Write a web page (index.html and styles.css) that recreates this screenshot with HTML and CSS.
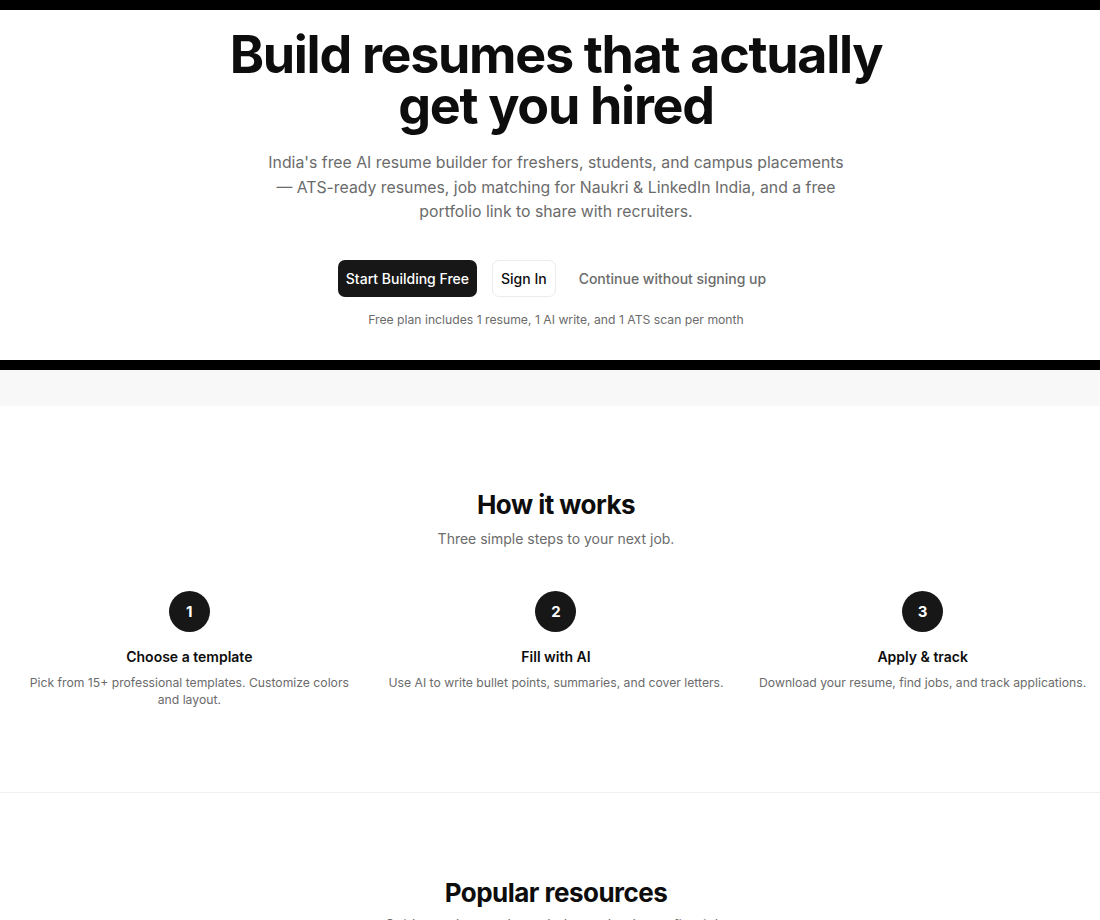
FILE: index.html
```html
<!DOCTYPE html>
<html>
<head>
    <meta name="viewport" content="width=device-width, initial-scale=1.0">
    <title>Resume Builder - Build resumes that actually get you hired</title>
    <link rel="stylesheet" href="styles.css">
</head>
<body>
    <div class="page">
        <div class="top-bar"></div>

        <section class="hero">
            <h1>Build resumes that actually<br>get you hired</h1>
            <p class="hero-text">India's free AI resume builder for freshers, students, and campus placements — ATS-ready resumes, job matching for Naukri &amp; LinkedIn India, and a free portfolio link to share with recruiters.</p>

            <div class="hero-actions">
                <a href="#" class="btn btn-primary">Start Building Free</a>
                <a href="#" class="btn btn-outline">Sign In</a>
                <a href="#" class="btn btn-link">Continue without signing up</a>
            </div>

            <p class="hero-note">Free plan includes 1 resume, 1 AI write, and 1 ATS scan per month</p>
        </section>

        <div class="divider-bar"></div>
        <div class="band"></div>

        <section class="steps">
            <h2>How it works</h2>
            <p class="section-sub">Three simple steps to your next job.</p>

            <div class="steps-grid">
                <div class="step">
                    <div class="step-num">1</div>
                    <h3>Choose a template</h3>
                    <p>Pick from 15+ professional templates. Customize colors and layout.</p>
                </div>
                <div class="step">
                    <div class="step-num">2</div>
                    <h3>Fill with AI</h3>
                    <p>Use AI to write bullet points, summaries, and cover letters.</p>
                </div>
                <div class="step">
                    <div class="step-num">3</div>
                    <h3>Apply &amp; track</h3>
                    <p>Download your resume, find jobs, and track applications.</p>
                </div>
            </div>
        </section>

        <section class="resources">
            <h2>Popular resources</h2>
            <p class="section-sub">Guides and examples to help you land your first job.</p>
        </section>
    </div>
</body>
</html>
```

FILE: styles.css
```css
:root {
    --ink: #0d0d0d;
    --dark: #171717;
    --muted: #6b6b6b;
    --soft: #f8f8f8;
    --line: #efefef;
}

html, body {
    margin: 0;
    padding: 0;
    overflow: hidden;
    background: #fff;
}

body {
    font-family: Inter, 'Noto Sans', sans-serif;
    color: var(--ink);
}

.page {
    width: 1112px;
}

.top-bar,
.divider-bar {
    height: 10px;
    background: #000;
}

/* Hero */
.hero {
    height: 350px;
    text-align: center;
    box-sizing: border-box;
    padding-top: 19px;
}

.hero h1 {
    margin: 0;
    font-size: 52px;
    line-height: 51px;
    font-weight: 700;
    letter-spacing: -0.025em;
}

.hero-text {
    max-width: 584px;
    margin: 20px auto 0;
    font-size: 15.8px;
    line-height: 24.5px;
    color: var(--muted);
}

.hero-actions {
    display: flex;
    justify-content: center;
    align-items: center;
    gap: 15px;
    margin-top: 35px;
}

.btn {
    display: inline-flex;
    align-items: center;
    height: 37px;
    padding: 0 8px;
    box-sizing: border-box;
    border-radius: 7px;
    font-size: 14px;
    font-weight: 500;
    text-decoration: none;
}

.btn-primary {
    background: var(--dark);
    color: #fff;
}

.btn-outline {
    border: 1px solid #ececec;
    color: var(--ink);
}

.btn-link {
    color: var(--muted);
    padding: 0 8px;
}

.hero-note {
    margin: 15px 0 0;
    font-size: 12.2px;
    color: var(--muted);
}

.band {
    height: 36px;
    background: var(--soft);
}

/* How it works */
.steps {
    height: 387px;
    box-sizing: border-box;
    padding-top: 84px;
    text-align: center;
    border-bottom: 1px solid var(--line);
}

h2 {
    margin: 0;
    font-size: 26px;
    line-height: 30px;
    font-weight: 700;
    letter-spacing: -0.02em;
}

.section-sub {
    margin: 10px 0 0;
    font-size: 14px;
    color: var(--muted);
}

.steps-grid {
    display: grid;
    grid-template-columns: repeat(3, 1fr);
    padding: 0 6px;
    margin-top: 44px;
}

.step {
    display: flex;
    flex-direction: column;
    align-items: center;
    padding: 0 12px;
}

.step-num {
    width: 41px;
    height: 41px;
    border-radius: 50%;
    background: var(--dark);
    color: #fff;
    display: flex;
    align-items: center;
    justify-content: center;
    font-size: 15px;
    font-weight: 700;
}

.step h3 {
    margin: 16px 0 0;
    font-size: 14px;
    font-weight: 600;
}

.step p {
    margin: 9px 0 0;
    font-size: 12.2px;
    line-height: 17px;
    color: var(--muted);
}

/* Popular resources */
.resources {
    padding-top: 85px;
    text-align: center;
}

.resources .section-sub {
    margin-top: 8px;
}
```
